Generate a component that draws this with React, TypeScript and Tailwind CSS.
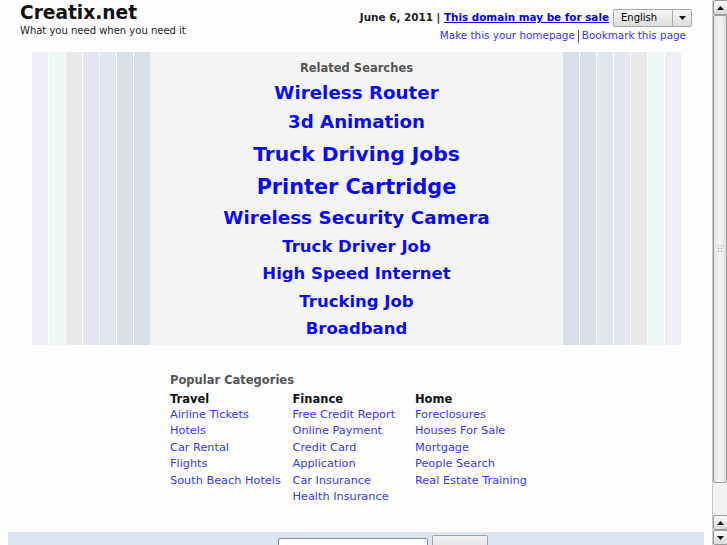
import React from "react";

const leftStripes = [
  "bg-[#eeeef7]",
  "bg-[#eef6f6]",
  "bg-[#e9e9ec]",
  "bg-[#e5e5f1]",
  "bg-[#dfe6ef]",
  "bg-[#dadee7]",
  "bg-[#d8dfe9]",
];

const searches = [
  { label: "Wireless Router", cls: "h-[30px] leading-[30px] text-[18.3px] mt-[2px]" },
  { label: "3d Animation", cls: "h-[28px] leading-[28px] text-[18.2px]" },
  { label: "Truck Driving Jobs", cls: "h-[36px] leading-[36px] text-[20.3px]" },
  { label: "Printer Cartridge", cls: "h-[30px] leading-[30px] text-[20.8px]" },
  { label: "Wireless Security Camera", cls: "h-[32px] leading-[32px] text-[18.4px]" },
  { label: "Truck Driver Job", cls: "h-[26px] leading-[26px] text-[16.5px]" },
  { label: "High Speed Internet", cls: "h-[28px] leading-[28px] text-[16.5px]" },
  { label: "Trucking Job", cls: "h-[28px] leading-[28px] text-[16.5px]" },
  { label: "Broadband", cls: "h-[26px] leading-[26px] text-[16.5px]" },
];

const categories = [
  {
    title: "Travel",
    links: ["Airline Tickets", "Hotels", "Car Rental", "Flights", "South Beach Hotels"],
  },
  {
    title: "Finance",
    links: [
      "Free Credit Report",
      "Online Payment",
      "Credit Card",
      "Application",
      "Car Insurance",
      "Health Insurance",
    ],
  },
  {
    title: "Home",
    links: ["Foreclosures", "Houses For Sale", "Mortgage", "People Search", "Real Estate Training"],
  },
];

function Stripes({ reverse }: { reverse?: boolean }) {
  const list = reverse ? [...leftStripes].reverse() : leftStripes;
  return (
    <div className="flex gap-px bg-white">
      {list.map((c, i) => (
        <div key={i} className={`w-[16px] ${c}`}></div>
      ))}
    </div>
  );
}

function Arrow({ up }: { up?: boolean }) {
  return (
    <div className="h-[15px] w-[15px] shrink-0 flex items-center justify-center border border-[#9a9a9a] rounded-[2px] bg-gradient-to-b from-[#fafafa] to-[#d9d9d9]">
      <svg width="7" height="4" viewBox="0 0 7 4">
        {up ? <path d="M0 4 L3.5 0 L7 4 Z" fill="#111" /> : <path d="M0 0 L3.5 4 L7 0 Z" fill="#111" />}
      </svg>
    </div>
  );
}

export default function App() {
  return (
    <div className="w-[727px] h-[545px] overflow-hidden flex bg-[#fdfdfd] font-['DejaVu_Sans',sans-serif]">
      {/* page */}
      <div className="w-[712px] flex flex-col">
        {/* header */}
        <div className="h-[52px] shrink-0 flex justify-between">
          <div className="pl-[20px] pt-[2px]">
            <div className="text-[18.6px] font-bold leading-[22px] text-[#111]">Creatix.net</div>
            <div className="text-[10px] leading-[13px] text-[#222]">What you need when you need it</div>
          </div>
          <div className="flex flex-col items-end pr-[20px] pt-[9px]">
            <div className="flex items-center gap-[4px] h-[18px]">
              <span className="text-[10.4px] font-bold text-[#222]">
                June 6, 2011 |{" "}
                <a className="text-[#0000ee] underline" href="#">
                  This domain may be for sale
                </a>
              </span>
              <div className="w-[79px] h-[18px] flex border border-[#a8a8a8] rounded-[2px] bg-gradient-to-b from-[#f6f6f6] to-[#dcdcdc] text-[10px] text-black">
                <span className="flex-1 pl-[7px] leading-[16px]">English</span>
                <span className="w-[19px] border-l border-[#a8a8a8] flex items-center justify-center">
                  <svg width="7" height="4" viewBox="0 0 7 4">
                    <path d="M0 0 L3.5 4 L7 0 Z" fill="#111" />
                  </svg>
                </span>
              </div>
            </div>
            <div className="flex items-center h-[16px] mt-[1px] pr-[6px] text-[10.4px] text-[#3535ff]">
              <a href="#">Make this your homepage</a>
              <span className="mx-[3px] w-px h-[13px] bg-[#555]"></span>
              <a href="#">Bookmark this page</a>
            </div>
          </div>
        </div>

        {/* related searches banner */}
        <div className="ml-[32px] w-[649px] h-[293px] shrink-0 flex">
          <Stripes />
          <div className="flex-1 bg-[#f4f4f4] flex flex-col items-center pt-[8px]">
            <div className="h-[16px] leading-[16px] text-[11.5px] font-bold text-[#555]">Related Searches</div>
            {searches.map((s) => (
              <a key={s.label} href="#" className={`${s.cls} font-bold text-[#0b0bf0] whitespace-nowrap`}>
                {s.label}
              </a>
            ))}
          </div>
          <Stripes reverse />
        </div>

        {/* popular categories */}
        <div className="pl-[170px] pt-[27px] h-[187px] shrink-0">
          <div className="h-[16px] leading-[16px] text-[11.5px] font-bold text-[#555]">Popular Categories</div>
          <div className="flex mt-[3px]">
            {categories.map((c) => (
              <div key={c.title} className="w-[122.5px] flex flex-col">
                <div className="h-[16px] leading-[16px] text-[11.5px] font-bold text-[#111]">{c.title}</div>
                {c.links.map((l) => (
                  <a key={l} href="#" className="h-[16.4px] leading-[16.4px] text-[11.3px] text-[#3535ff] whitespace-nowrap">
                    {l}
                  </a>
                ))}
              </div>
            ))}
          </div>
        </div>

        {/* search bar */}
        <div className="ml-[8px] w-[696px] h-[40px] shrink-0 bg-[#dce5f1] flex justify-center gap-[4px] pt-[6px] pl-[54px]">
          <div className="w-[150px] h-[20px] bg-white border border-[#8a8a8a] rounded-[2px]"></div>
          <div className="w-[56px] h-[22px] -mt-[3px] border border-[#a0a0a0] rounded-[2px] bg-gradient-to-b from-[#f2f2f2] to-[#dadada]"></div>
        </div>
      </div>

      {/* scrollbar */}
      <div className="w-[15px] flex flex-col bg-[#eeeeee] border-l border-[#c8c8c8]">
        <Arrow up />
        <div className="h-[468px] shrink-0 border border-[#9a9a9a] rounded-[2px] bg-gradient-to-r from-[#e4e4e4] via-[#f4f4f4] to-[#e0e0e0] flex items-center justify-center">
          <div className="w-[7px] h-[10px] bg-[radial-gradient(#999_1px,transparent_1px)] bg-[length:3px_3px]"></div>
        </div>
        <div className="flex-1 bg-[#f2f2f2]"></div>
        <Arrow up />
        <Arrow />
      </div>
    </div>
  );
}
